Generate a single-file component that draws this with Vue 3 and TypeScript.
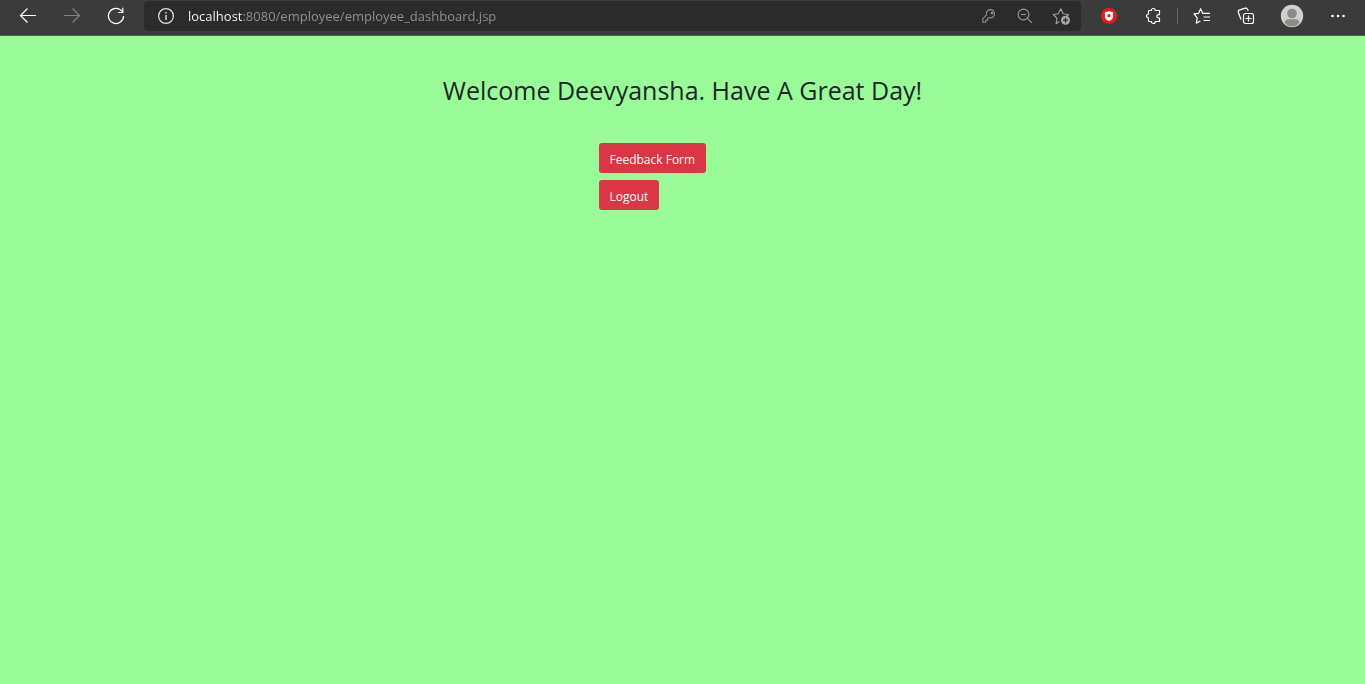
<script setup lang="ts">
import { ref } from 'vue'

const employeeName = ref('Deevyansha')
const address = ref('localhost:8080/employee/employee_dashboard.jsp')
</script>

<template>
  <div class="browser">
    <header class="toolbar">
      <nav class="nav" aria-label="Browser navigation">
        <button class="tool" type="button" aria-label="Back">
          <svg width="20" height="20" viewBox="0 0 20 20" stroke="#fff" stroke-width="1.2"><path d="M18 9.5H2.5M9.5 2.5l-7 7 7 7" /></svg>
        </button>
        <button class="tool" type="button" aria-label="Forward" disabled>
          <svg width="20" height="20" viewBox="0 0 20 20" stroke="#858585" stroke-width="1.2"><path d="M2 9.5h15.5M10.5 2.5l7 7-7 7" /></svg>
        </button>
        <button class="tool" type="button" aria-label="Refresh">
          <svg width="20" height="20" viewBox="0 0 20 20" stroke="#fff" stroke-width="1.2"><path d="M16.2 5.5A7.6 7.6 0 1 0 17.6 10M16.8 1.8v4.7h-4.7" /></svg>
        </button>
      </nav>

      <div class="address">
        <button class="site" type="button" aria-label="Site information">
          <svg width="18" height="18" viewBox="0 0 18 18" stroke="#e4e4e4" stroke-width="1.2"><circle cx="9" cy="9" r="7.4" /><path d="M9 8v5M9 5v1.4" stroke-width="1.4" /></svg>
        </button>
        <input v-model="address" class="url" type="text" aria-label="Address" spellcheck="false" />
        <button class="action" type="button" aria-label="Passwords">
          <svg width="18" height="18" viewBox="0 0 18 18" stroke="#929292" stroke-width="1.1"><path d="M9 10.6a4.1 4.1 0 1 0-2.6-2.8L2.8 12v3.300h3v-2h1.800v-1.800z" stroke-linejoin="round" /><circle cx="12" cy="6" r=".8" fill="#929292" /></svg>
        </button>
        <button class="action" type="button" aria-label="Zoom out">
          <svg width="18" height="18" viewBox="0 0 18 18" stroke="#999" stroke-width="1.1"><circle cx="7.5" cy="7.5" r="5.4" /><path d="M5 7.5h5M11.4 11.4l4.5 4.5" /></svg>
        </button>
        <button class="action" type="button" aria-label="Add to favorites">
          <svg width="18" height="18" viewBox="0 0 18 18" stroke="#a1a1a1" stroke-width="1.1"><path d="M7.500 14.500L4 16.700l1-5.300L1.300 7.500l5-.7L8.800 1.800l2.400 5 5.300.7-2 2" stroke-linejoin="round" /><circle cx="13.500" cy="13.200" r="4.500" fill="#a8a8a8" stroke="none" /><path d="M11 13.200h5M13.500 10.700v5" stroke="#292929" stroke-width="1.2" /></svg>
        </button>
      </div>

      <button class="tool" type="button" aria-label="Shield extension">
        <svg width="18" height="18" viewBox="0 0 18 18"><circle cx="9" cy="9" r="8" fill="#e31b23" /><path d="M9 4.2l4.1 1.1v3.6c0 2.5-1.7 4.2-4.1 5.2-2.4-1-4.1-2.7-4.1-5.2V5.300z" fill="#fff" /><path d="M7.600 7.200h2.800v2.200L9 10.500 7.600 9.400z" fill="#e31b23" /></svg>
      </button>
      <button class="tool" type="button" aria-label="Extensions">
        <svg width="18" height="18" viewBox="0 0 18 18" stroke="#fff" stroke-width="1.2"><path d="M4.500 3.500h2.800a2 2 0 0 1 4 0H15.500v4.200h-1a1.600 1.600 0 1 0 0 3.300h1v3.500h-4.200a2 2 0 0 1-4 0H4.500v-3.500a2 2 0 0 1 0-4z" stroke-linejoin="round" /></svg>
      </button>
      <span class="divider" aria-hidden="true"></span>
      <button class="tool" type="button" aria-label="Favorites">
        <svg width="18" height="18" viewBox="0 0 18 18" stroke="#fff" stroke-width="1.2"><path d="M7.300 14l-4 2.300.9-5.400L1 6.900l4.600-.6L7.700 1.800l2 4.500H17M10.500 10H17M10.500 13.500H17" stroke-linejoin="round" /></svg>
      </button>
      <button class="tool" type="button" aria-label="Collections">
        <svg width="18" height="18" viewBox="0 0 18 18" stroke="#fff" stroke-width="1.2"><rect x="6.500" y="6.500" width="10" height="10" rx="2" /><path d="M8.500 11.500h6M11.500 8.500v6M4 12.500L1.300 5.200Q.8 3.700 2.300 3.100L8.200 1.200Q9.800.9 10.500 2.300l.7 1.700" /></svg>
      </button>
      <button class="tool profile" type="button" aria-label="Profile">
        <svg width="24" height="24" viewBox="0 0 24 24"><circle cx="12" cy="12" r="11.200" fill="#d2d0ce" /><circle cx="12" cy="9.500" r="4.800" fill="#8c8987" /><path d="M4.500 18.200c1-2.500 2.700-3 5-3h5c2.300 0 4 .5 5 3-3.500 5.800-11.500 5.800-15 0z" fill="#8c8987" /></svg>
      </button>
      <button class="tool" type="button" aria-label="Settings and more">
        <svg width="18" height="18" viewBox="0 0 18 18"><g fill="#fff"><circle cx="3.500" cy="9" r="1.300" /><circle cx="9" cy="9" r="1.300" /><circle cx="14.500" cy="9" r="1.300" /></g></svg>
      </button>
    </header>

    <main class="page">
      <h1>Welcome {{ employeeName }}. Have A Great Day!</h1>
      <div class="links">
        <a class="btn" href="#feedback">Feedback Form</a>
        <a class="btn" href="#logout">Logout</a>
      </div>
    </main>
  </div>
</template>

<style>
body {
  margin: 0;
  background: #98fb98;
}
</style>

<style scoped>
.browser {
  display: flex;
  flex-direction: column;
  min-height: 100vh;
  background: #98fb98;
  font-family: "Segoe UI", "Open Sans", "Noto Sans", sans-serif;
}

.toolbar {
  display: flex;
  align-items: center;
  box-sizing: border-box;
  height: 36px;
  padding: 0 5px 3px 6px;
  border-bottom: 1px solid #595959;
  background: #3b3b3b;
}

.nav {
  display: flex;
}

button {
  display: flex;
  flex: none;
  align-items: center;
  justify-content: center;
  padding: 0;
  border: 0;
  background: transparent;
}

svg {
  display: block;
  fill: none;
}

.tool {
  width: 44px;
  height: 30px;
}

.profile {
  width: 48px;
}

.address {
  display: flex;
  flex: 1;
  align-items: center;
  min-width: 0;
  height: 30px;
  margin: 0 6px;
  padding-right: 2px;
  border-radius: 4px;
  background: #2b2b2b;
}

.site {
  width: 44px;
  height: 30px;
}

.url {
  flex: 1;
  min-width: 0;
  height: 30px;
  padding: 0;
  border: 0;
  outline: 0;
  background: linear-gradient(90deg, #fff 55px, #949494 55px);
  background-clip: text;
  -webkit-background-clip: text;
  color: transparent;
  font: 13px "Segoe UI", "Open Sans", "Noto Sans", sans-serif;
}

.action {
  width: 36px;
  height: 30px;
}

.divider {
  width: 1px;
  height: 16px;
  margin: 0 2px;
  background: #666;
}

.page {
  display: flex;
  flex-direction: column;
  align-items: center;
  padding: 39px 16px;
}

h1 {
  margin: 0;
  color: #212529;
  font-size: 25px;
  font-weight: 500;
  line-height: 30px;
  text-align: center;
}

.links {
  display: flex;
  flex-direction: column;
  align-items: flex-start;
  gap: 7px;
  width: 168px;
  margin-top: 38px;
}

.btn {
  padding: 7px 11px 3px;
  border-radius: 3px;
  background: #dc3545;
  color: #fff;
  font-size: 12px;
  line-height: 20px;
  text-decoration: none;
  white-space: nowrap;
}
</style>
